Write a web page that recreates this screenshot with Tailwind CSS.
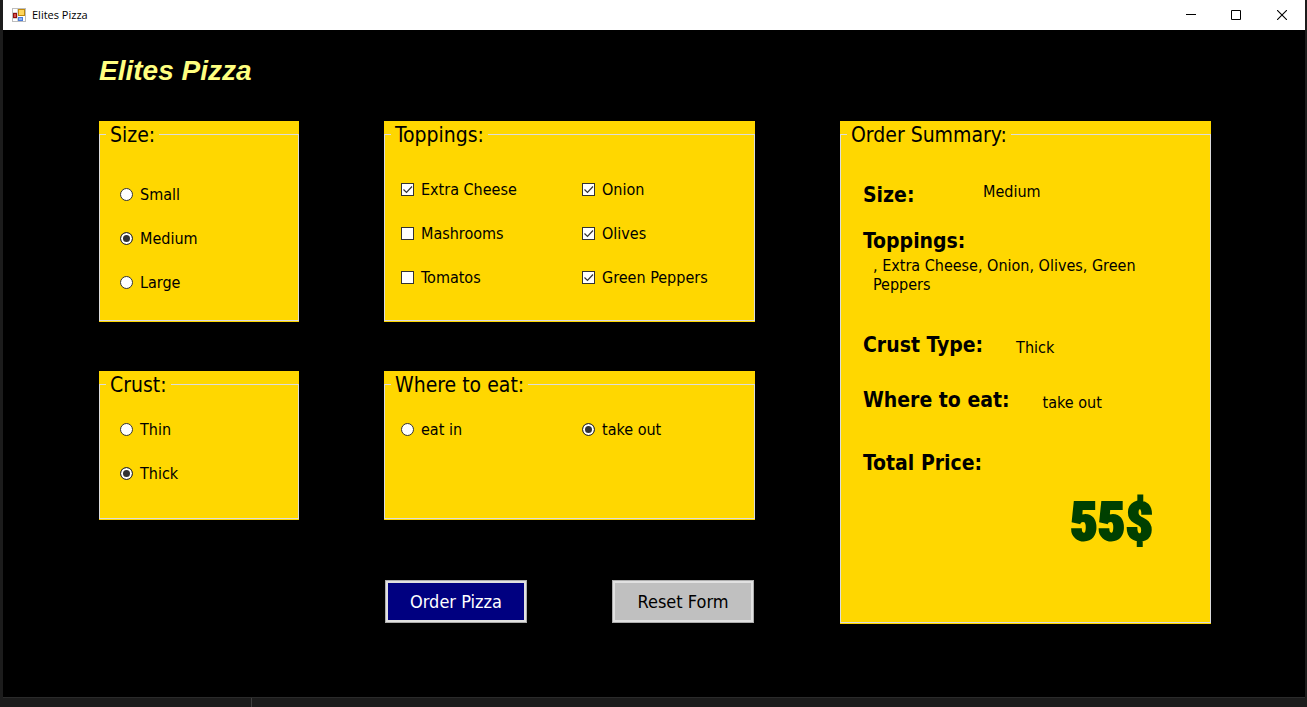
<!DOCTYPE html>
<html lang="en">
<head>
<meta charset="utf-8">
<meta name="viewport" content="width=device-width, initial-scale=1">
<title>Elites Pizza</title>
<script src="https://cdn.jsdelivr.net/npm/@tailwindcss/browser@4"></script>
</head>
<body class="flex min-h-screen flex-col bg-[#1c1c1c] pr-[2px] pl-[3px] font-['DejaVu_Sans_Condensed','Noto_Sans',sans-serif] text-base text-black">
<header class="flex h-[30px] items-center justify-between bg-white pl-[9px]">
  <div class="flex items-center gap-[6px]">
    <svg class="size-[14px]" viewBox="0 0 14 14" aria-hidden="true">
      <rect x="0.5" y="0.5" width="13" height="13" fill="#fff" stroke="#bdbdbd"/>
      <path d="M5.500 1v12M1 4.500h5M1 10.500h5" stroke="#d4d4d4" fill="none"/>
      <rect x="1.500" y="5.500" width="3" height="4" fill="#d8504a" stroke="#8e1010"/>
      <rect x="6.500" y="1.500" width="6" height="6" fill="#ffd65c" stroke="#c08a0c"/>
      <rect x="6.500" y="9.500" width="4" height="3" fill="#8db4f6" stroke="#4a7ddb"/>
    </svg>
    <span class="font-['Open_Sans',sans-serif] text-[11px] leading-4">Elites Pizza</span>
  </div>
  <div class="flex">
    <button type="button" aria-label="Minimize" class="flex h-[30px] w-[45px] items-center justify-center"><svg class="size-[10px]" viewBox="0 0 10 10"><path d="M0 4.500h10" stroke="#000"/></svg></button>
    <button type="button" aria-label="Maximize" class="flex h-[30px] w-[46px] items-center justify-center"><svg class="size-[10px]" viewBox="0 0 10 10"><path d="M.5 .5h9v9h-9z" fill="none" stroke="#000"/></svg></button>
    <button type="button" aria-label="Close" class="flex h-[30px] w-[46px] items-center justify-center"><svg class="size-[10px]" viewBox="0 0 10 10"><path d="M0 0l10 10M10 0l-10 10" stroke="#000" stroke-width="1.100"/></svg></button>
  </div>
</header>

<main class="flex-1 bg-black pt-[23px] pr-[94px] pb-8 pl-24">
  <h1 class="font-['Liberation_Sans',Arial,sans-serif] text-[28px] leading-9 font-bold text-[#ffff80] italic">Elites Pizza</h1>
  <form class="mt-8 grid grid-cols-[200fr_371fr_371fr] items-start gap-x-[85px]">

    <div class="flex flex-col gap-[49px]">
      <div class="flex min-h-[201px] bg-[#ffd700] pb-px">
        <fieldset class="min-w-0 flex-1 border border-[#dcdcdc]">
          <legend class="ml-[6px] px-[4px] pt-[2px] text-[21px] leading-[25px]">Size:</legend>
          <div class="flex flex-col gap-[25px] pt-[37px] pl-5">
            <label class="flex items-center gap-[7px] leading-[19px]"><input type="radio" name="size" class="size-[13px] appearance-none rounded-full border border-[#333] bg-white checked:bg-[#333] checked:shadow-[inset_0_0_0_2px_white]">Small</label>
            <label class="flex items-center gap-[7px] leading-[19px]"><input type="radio" name="size" checked class="size-[13px] appearance-none rounded-full border border-[#333] bg-white checked:bg-[#333] checked:shadow-[inset_0_0_0_2px_white]">Medium</label>
            <label class="flex items-center gap-[7px] leading-[19px]"><input type="radio" name="size" class="size-[13px] appearance-none rounded-full border border-[#333] bg-white checked:bg-[#333] checked:shadow-[inset_0_0_0_2px_white]">Large</label>
          </div>
        </fieldset>
      </div>
      <div class="flex min-h-[149px] bg-[#ffd700] pb-px">
        <fieldset class="min-w-0 flex-1 border border-[#dcdcdc]">
          <legend class="ml-[6px] px-[4px] pt-[2px] text-[21px] leading-[25px]">Crust:</legend>
          <div class="flex flex-col gap-[25px] pt-[22px] pl-5">
            <label class="flex items-center gap-[7px] leading-[19px]"><input type="radio" name="crust" class="size-[13px] appearance-none rounded-full border border-[#333] bg-white checked:bg-[#333] checked:shadow-[inset_0_0_0_2px_white]">Thin</label>
            <label class="flex items-center gap-[7px] leading-[19px]"><input type="radio" name="crust" checked class="size-[13px] appearance-none rounded-full border border-[#333] bg-white checked:bg-[#333] checked:shadow-[inset_0_0_0_2px_white]">Thick</label>
          </div>
        </fieldset>
      </div>
    </div>

    <div class="flex flex-col gap-[49px]">
      <div class="flex min-h-[201px] bg-[#ffd700] pb-px">
        <fieldset class="min-w-0 flex-1 border border-[#dcdcdc]">
          <legend class="ml-[6px] px-[4px] pt-[2px] text-[21px] leading-[25px]">Toppings:</legend>
          <div class="grid grid-cols-[181fr_172fr] gap-y-[25px] pt-8 pl-4">
            <label class="flex items-center gap-[7px] leading-[19px]"><span class="grid"><input type="checkbox" checked class="peer col-start-1 row-start-1 size-[13px] appearance-none border border-[#333] bg-white"><svg class="pointer-events-none invisible col-start-1 row-start-1 size-[13px] peer-checked:visible" viewBox="0 0 13 13"><path d="M2.500 6.500l3 3L11 3.500" fill="none" stroke="#333" stroke-width="1.200"/></svg></span>Extra Cheese</label>
            <label class="flex items-center gap-[7px] leading-[19px]"><span class="grid"><input type="checkbox" checked class="peer col-start-1 row-start-1 size-[13px] appearance-none border border-[#333] bg-white"><svg class="pointer-events-none invisible col-start-1 row-start-1 size-[13px] peer-checked:visible" viewBox="0 0 13 13"><path d="M2.500 6.500l3 3L11 3.500" fill="none" stroke="#333" stroke-width="1.200"/></svg></span>Onion</label>
            <label class="flex items-center gap-[7px] leading-[19px]"><span class="grid"><input type="checkbox" class="peer col-start-1 row-start-1 size-[13px] appearance-none border border-[#333] bg-white"><svg class="pointer-events-none invisible col-start-1 row-start-1 size-[13px] peer-checked:visible" viewBox="0 0 13 13"><path d="M2.500 6.500l3 3L11 3.500" fill="none" stroke="#333" stroke-width="1.200"/></svg></span>Mashrooms</label>
            <label class="flex items-center gap-[7px] leading-[19px]"><span class="grid"><input type="checkbox" checked class="peer col-start-1 row-start-1 size-[13px] appearance-none border border-[#333] bg-white"><svg class="pointer-events-none invisible col-start-1 row-start-1 size-[13px] peer-checked:visible" viewBox="0 0 13 13"><path d="M2.500 6.500l3 3L11 3.500" fill="none" stroke="#333" stroke-width="1.200"/></svg></span>Olives</label>
            <label class="flex items-center gap-[7px] leading-[19px]"><span class="grid"><input type="checkbox" class="peer col-start-1 row-start-1 size-[13px] appearance-none border border-[#333] bg-white"><svg class="pointer-events-none invisible col-start-1 row-start-1 size-[13px] peer-checked:visible" viewBox="0 0 13 13"><path d="M2.500 6.500l3 3L11 3.500" fill="none" stroke="#333" stroke-width="1.200"/></svg></span>Tomatos</label>
            <label class="flex items-center gap-[7px] leading-[19px]"><span class="grid"><input type="checkbox" checked class="peer col-start-1 row-start-1 size-[13px] appearance-none border border-[#333] bg-white"><svg class="pointer-events-none invisible col-start-1 row-start-1 size-[13px] peer-checked:visible" viewBox="0 0 13 13"><path d="M2.500 6.500l3 3L11 3.500" fill="none" stroke="#333" stroke-width="1.200"/></svg></span>Green Peppers</label>
          </div>
        </fieldset>
      </div>
      <div class="flex min-h-[149px] bg-[#ffd700] pb-px">
        <fieldset class="min-w-0 flex-1 border border-[#dcdcdc]">
          <legend class="ml-[6px] px-[4px] pt-[2px] text-[21px] leading-[25px]">Where to eat:</legend>
          <div class="grid grid-cols-[181fr_172fr] pt-[22px] pl-4">
            <label class="flex items-center gap-[7px] leading-[19px]"><input type="radio" name="where" class="size-[13px] appearance-none rounded-full border border-[#333] bg-white checked:bg-[#333] checked:shadow-[inset_0_0_0_2px_white]">eat in</label>
            <label class="flex items-center gap-[7px] leading-[19px]"><input type="radio" name="where" checked class="size-[13px] appearance-none rounded-full border border-[#333] bg-white checked:bg-[#333] checked:shadow-[inset_0_0_0_2px_white]">take out</label>
          </div>
        </fieldset>
      </div>
      <div class="mt-[11px] flex justify-between px-px">
        <button type="button" class="h-[43px] w-[142px] border border-[#adadad] bg-[#000080] text-[18px] text-white inset-ring-2 inset-ring-[#e1e1e1]">Order Pizza</button>
        <button type="reset" class="h-[43px] w-[142px] border border-[#adadad] bg-[#c0c0c0] text-[18px] text-black inset-ring-2 inset-ring-[#e1e1e1]">Reset Form</button>
      </div>
    </div>

    <div class="flex min-h-[503px] bg-[#ffd700] pb-px">
      <fieldset class="min-w-0 flex-1 border border-[#dcdcdc]">
        <legend class="ml-[6px] px-[4px] pt-[2px] text-[21px] leading-[25px]">Order Summary:</legend>
        <dl class="pt-[33px] pl-[22px]">
          <div class="flex items-start">
            <dt class="w-[120px] text-[21px] leading-7 font-bold">Size:</dt>
            <dd class="leading-[22px]">Medium</dd>
          </div>
          <div class="mt-[18px]">
            <dt class="text-[21px] leading-7 font-bold">Toppings:</dt>
            <dd class="mt-px mr-[60px] ml-[10px] leading-[19px]">, Extra Cheese, Onion, Olives, Green Peppers</dd>
          </div>
          <div class="mt-[37px] flex items-end gap-[33px]">
            <dt class="text-[21px] leading-7 font-bold">Crust Type:</dt>
            <dd class="leading-[22px]">Thick</dd>
          </div>
          <div class="mt-[27px] flex items-end gap-[33px]">
            <dt class="text-[21px] leading-7 font-bold">Where to eat:</dt>
            <dd class="leading-[22px]">take out</dd>
          </div>
          <div class="mt-[35px]">
            <dt class="text-[21px] leading-7 font-bold">Total Price:</dt>
            <dd class="mt-[17px] pr-[57px] text-right font-['Roboto_Condensed','Roboto',sans-serif] text-[54px] leading-[56px] font-black text-[#004000] [-webkit-text-stroke:2px_#004000]">55$</dd>
          </div>
        </dl>
      </fieldset>
    </div>
  </form>
</main>
<footer class="flex h-[10px] border-t border-[#2b2b2b]"><div class="w-[249px] border-r border-[#3f3f3f]"></div></footer>
</body>
</html>
